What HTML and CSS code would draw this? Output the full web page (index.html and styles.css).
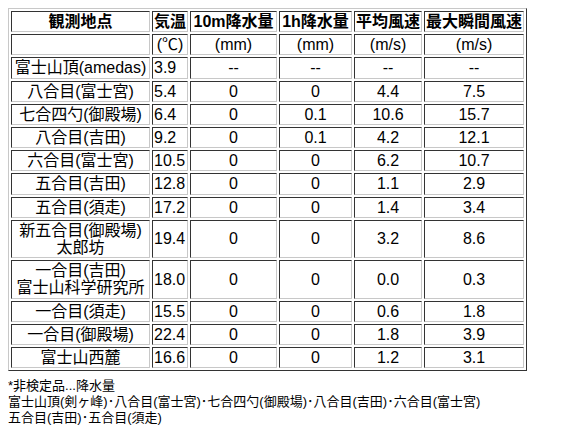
FILE: index.html
```html
<!DOCTYPE html>
<html lang="ja">
<head>
<meta charset="utf-8">
<title>観測地点</title>
<link rel="stylesheet" href="styles.css">
</head>
<body>
<table class="obs">
  <tr>
    <th class="c1">観測地点</th>
    <th class="c2">気温</th>
    <th class="c3">10m降水量</th>
    <th class="c4">1h降水量</th>
    <th class="c5">平均風速</th>
    <th class="c6">最大瞬間風速</th>
  </tr>
  <tr><td class="ctr"></td><td class="ctr">(℃)</td><td class="ctr">(mm)</td><td class="ctr">(mm)</td><td class="ctr">(m/s)</td><td class="ctr">(m/s)</td></tr>
  <tr><td class="ctr">富士山頂(amedas)</td><td>3.9</td><td class="ctr">--</td><td class="ctr">--</td><td class="ctr">--</td><td class="ctr">--</td></tr>
  <tr><td class="ctr">八合目(富士宮)</td><td>5.4</td><td class="ctr">0</td><td class="ctr">0</td><td class="ctr">4.4</td><td class="ctr">7.5</td></tr>
  <tr><td class="ctr">七合四勺(御殿場)</td><td>6.4</td><td class="ctr">0</td><td class="ctr">0.1</td><td class="ctr">10.6</td><td class="ctr">15.7</td></tr>
  <tr><td class="ctr">八合目(吉田)</td><td>9.2</td><td class="ctr">0</td><td class="ctr">0.1</td><td class="ctr">4.2</td><td class="ctr">12.1</td></tr>
  <tr><td class="ctr">六合目(富士宮)</td><td>10.5</td><td class="ctr">0</td><td class="ctr">0</td><td class="ctr">6.2</td><td class="ctr">10.7</td></tr>
  <tr><td class="ctr">五合目(吉田)</td><td>12.8</td><td class="ctr">0</td><td class="ctr">0</td><td class="ctr">1.1</td><td class="ctr">2.9</td></tr>
  <tr><td class="ctr">五合目(須走)</td><td>17.2</td><td class="ctr">0</td><td class="ctr">0</td><td class="ctr">1.4</td><td class="ctr">3.4</td></tr>
  <tr><td class="ctr">新五合目(御殿場)<br>太郎坊</td><td>19.4</td><td class="ctr">0</td><td class="ctr">0</td><td class="ctr">3.2</td><td class="ctr">8.6</td></tr>
  <tr><td class="ctr">一合目(吉田)<br>富士山科学研究所</td><td>18.0</td><td class="ctr">0</td><td class="ctr">0</td><td class="ctr">0.0</td><td class="ctr">0.3</td></tr>
  <tr><td class="ctr">一合目(須走)</td><td>15.5</td><td class="ctr">0</td><td class="ctr">0</td><td class="ctr">0.6</td><td class="ctr">1.8</td></tr>
  <tr><td class="ctr">一合目(御殿場)</td><td>22.4</td><td class="ctr">0</td><td class="ctr">0</td><td class="ctr">1.8</td><td class="ctr">3.9</td></tr>
  <tr><td class="ctr">富士山西麓</td><td>16.6</td><td class="ctr">0</td><td class="ctr">0</td><td class="ctr">1.2</td><td class="ctr">3.1</td></tr>
</table>
<div class="notes">
  <div>*非検定品...降水量</div>
  <div>富士山頂(剣ヶ峰)･八合目(富士宮)･七合四勺(御殿場)･八合目(吉田)･六合目(富士宮)</div>
  <div>五合目(吉田)･五合目(須走)</div>
</div>
</body>
</html>
```
FILE: styles.css
```css
body {
  margin: 8px;
  font-family: "Liberation Sans", "Noto Sans CJK JP", sans-serif;
  color: #000;
  background: #fff;
}
.obs {
  border-collapse: separate;
  border-spacing: 2px;
  border-style: solid;
  border-width: 1px;
  border-color: #c8c8c8 #333 #333 #c8c8c8;
  font-size: 16px;
  line-height: 17.2px;
}
.obs th,
.obs td {
  border-style: solid;
  border-width: 1px;
  border-color: #333 #c8c8c8 #c8c8c8 #333;
  padding: 1px;
  vertical-align: middle;
  white-space: nowrap;
}
.obs th {
  font-weight: bold;
  text-align: center;
}
.obs td {
  text-align: left;
}
.obs td.ctr {
  text-align: center;
}
.c1 { width: 135px; }
.c2 { width: 32px; }
.c3 { width: 83px; }
.c4 { width: 69px; }
.c5 { width: 64px; }
.c6 { width: 95px; }
.notes {
  margin-top: 7px;
  font-size: 13px;
  line-height: 16px;
}
```
